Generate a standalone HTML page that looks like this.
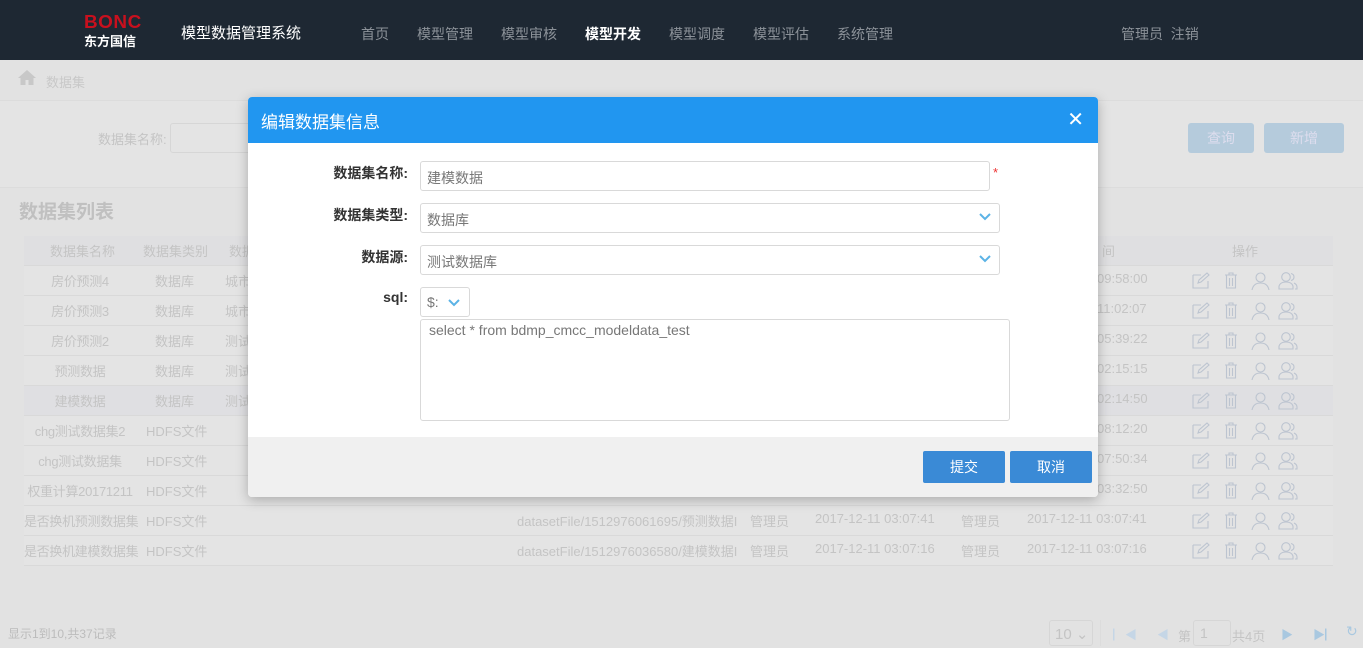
<!DOCTYPE html>
<html><head><meta charset="utf-8"><style>
*{margin:0;padding:0;box-sizing:border-box}
body{width:1363px;height:648px;overflow:hidden;background:#e2e2e2;font-family:"Liberation Sans","Noto Sans CJK SC",sans-serif;font-size:13px;color:#bdbdbd;position:relative}
.a{position:absolute;white-space:nowrap}
.top{position:absolute;left:0;top:0;width:1363px;height:60px;background:#1e2833}
.nav{position:absolute;top:24px;font-size:14px;color:#8c9299}
.row{position:absolute;left:24px;width:1309px;height:30px;border-bottom:1px solid #d9d9d9;background:#e4e4e4}
.row span{position:absolute;top:5px;white-space:nowrap;color:#c4c4c4}
.ic{position:absolute;top:6px}
.modal{position:absolute;left:248px;top:97px;width:850px;height:400px;background:#fff;border-radius:4px;box-shadow:0 3px 12px rgba(0,0,0,.25);overflow:hidden}
.mh{height:46px;background:#2196f0;color:#fff;font-size:17px;padding:11px 0 0 13px}
.lbl{position:absolute;font-weight:bold;color:#333;font-size:14px;text-align:right;width:100px}
.inp{position:absolute;border:1px solid #d9d9d9;border-radius:3px;background:#fff;color:#777;font-size:14px;padding:6px 6px}
.chev{position:absolute;right:8px;top:9px}
.btn{position:absolute;top:354px;height:32px;width:82px;background:#3a8ad6;color:#fff;font-size:14px;text-align:center;line-height:32px;border-radius:2px}
</style></head><body>
<div class="top">
 <div class="a" style="left:84px;top:13px;color:#c8101e;font-weight:bold;font-size:18px;letter-spacing:0.5px;line-height:18px;transform:scaleX(1.05);transform-origin:left">BONC</div>
 <div class="a" style="left:84px;top:31px;color:#fff;font-weight:bold;font-size:13px">东方国信</div>
 <div class="a" style="left:181px;top:22px;color:#fff;font-size:15px">模型数据管理系统</div>
 <div class="nav" style="left:361px">首页</div>
 <div class="nav" style="left:417px">模型管理</div>
 <div class="nav" style="left:501px">模型审核</div>
 <div class="nav" style="left:585px;color:#fff;font-weight:bold">模型开发</div>
 <div class="nav" style="left:669px">模型调度</div>
 <div class="nav" style="left:753px">模型评估</div>
 <div class="nav" style="left:837px">系统管理</div>
 <div class="nav" style="left:1121px">管理员&nbsp; 注销</div>
</div>
<svg class="a" style="left:18px;top:70px" width="18" height="15" viewBox="0 0 18 15"><path d="M9 0L0 8h2.5v7h5v-5h3v5h5V8H18z" fill="#c8c8c8"/></svg>
<div class="a" style="left:46px;top:72px;color:#c8c8c8">数据集</div>
<div class="a" style="left:0;top:100px;width:1363px;height:88px;background:#e4e4e4;border-top:1px solid #dcdcdc;border-bottom:1px solid #dcdcdc"></div>
<div class="a" style="left:98px;top:129px;color:#c4c4c4">数据集名称:</div>
<div class="a" style="left:170px;top:123px;width:100px;height:30px;border:1px solid #d6d6d6;border-radius:3px"></div>
<div class="a" style="left:1188px;top:123px;width:66px;height:30px;background:#b5cbdc;border-radius:3px;color:#dde;text-align:center;line-height:30px;font-size:14px">查询</div>
<div class="a" style="left:1264px;top:123px;width:80px;height:30px;background:#b5cbdc;border-radius:3px;color:#dde;text-align:center;line-height:30px;font-size:14px">新增</div>
<div class="a" style="left:19px;top:197px;font-size:19px;font-weight:bold;color:#c0c0c0">数据集列表</div>
<div class="a" style="left:24px;top:236px;width:1309px;height:330px;border:1px solid #dadada;background:#e4e4e4"></div>
<div class="row" style="top:236px;background:#dfdfe1">
 <span style="left:26px">数据集名称</span><span style="left:119px">数据集类别</span><span style="left:205px">数据</span><span style="left:1078px">间</span><span style="left:1208px">操作</span>
</div>
<div id="rows"></div>
<div class="a" style="left:8px;top:625px;color:#bcbcbc;font-size:12px">显示1到10,共37记录</div>
<div class="a" style="left:1049px;top:620px;width:44px;height:26px;border:1px solid #d6d6d6;border-radius:3px;color:#c4c4c4;font-size:15px;padding:4px 5px">10 ⌄</div>
<div class="a" style="left:1100px;top:620px;height:26px;width:60px;border-left:1px solid #dcdcdc"></div>
<div class="a" style="left:1113px;top:626px;color:#c5d6e6;font-size:12px">▏◀&nbsp;&nbsp;&nbsp;&nbsp;&nbsp;&nbsp;◀</div>
<div class="a" style="left:1178px;top:626px;color:#c4c4c4">第</div>
<div class="a" style="left:1193px;top:620px;width:38px;height:26px;border:1px solid #d6d6d6;border-radius:3px;padding:4px 6px;color:#c4c4c4;font-size:14px">1</div>
<div class="a" style="left:1232px;top:626px;color:#c4c4c4">共4页</div>
<div class="a" style="left:1281px;top:626px;color:#a9c8e0;font-size:12px">▶&nbsp;&nbsp;&nbsp;&nbsp;&nbsp;&nbsp;▶▏</div>
<div class="a" style="left:1346px;top:623px;color:#a9c8e0;font-size:14px">↻</div>

<div class="modal">
 <div class="mh">编辑数据集信息<span style="position:absolute;right:14px;top:10px;font-size:20px">✕</span></div>
 <div class="lbl" style="left:60px;top:66px">数据集名称:</div>
 <div class="inp" style="left:172px;top:64px;width:570px;height:30px">建模数据</div>
 <div class="a" style="left:745px;top:68px;color:#e33;font-size:13px">*</div>
 <div class="lbl" style="left:60px;top:108px">数据集类型:</div>
 <div class="inp" style="left:172px;top:106px;width:580px;height:30px">数据库<svg class="chev" width="12" height="8"><path d="M1 1l5 5 5-5" stroke="#5bb3e6" stroke-width="2" fill="none"/></svg></div>
 <div class="lbl" style="left:60px;top:150px">数据源:</div>
 <div class="inp" style="left:172px;top:148px;width:580px;height:30px">测试数据库<svg class="chev" width="12" height="8"><path d="M1 1l5 5 5-5" stroke="#5bb3e6" stroke-width="2" fill="none"/></svg></div>
 <div class="lbl" style="left:60px;top:192px">sql:</div>
 <div class="inp" style="left:172px;top:190px;width:50px;height:30px">$:<svg class="chev" width="12" height="8" style="right:9px;top:11px"><path d="M1 1l5 5 5-5" stroke="#5bb3e6" stroke-width="2" fill="none"/></svg></div>
 <div class="inp" style="left:172px;top:222px;width:590px;height:102px;padding:2px 8px">select * from bdmp_cmcc_modeldata_test</div>
 <div style="position:absolute;left:0;top:340px;width:850px;height:60px;background:#f0f0f0"></div>
 <div class="btn" style="left:675px">提交</div>
 <div class="btn" style="left:762px">取消</div>
</div>
<script>
var d=[["房价预测4","数据库","城市","09:58:00"],["房价预测3","数据库","城市","11:02:07"],["房价预测2","数据库","测试","05:39:22"],["预测数据","数据库","测试","02:15:15"],["建模数据","数据库","测试","02:14:50"],["chg测试数据集2","HDFS文件","","08:12:20"],["chg测试数据集","HDFS文件","","07:50:34"],["权重计算20171211","HDFS文件","","03:32:50"],["是否换机预测数据集","HDFS文件","","03:07:41","datasetFile/1512976061695/预测数据I","2017-12-11 03:07:41"],["是否换机建模数据集","HDFS文件","","03:07:16","datasetFile/1512976036580/建模数据I","2017-12-11 03:07:16"]];
var ic='<svg class="ic" style="left:1168px" width="18" height="17" viewBox="0 0 18 17" fill="none" stroke="#bcc4d0" stroke-width="1.1"><path d="M1 3h8M1 3v13h15V9"/><path d="M6 11l1-3 8-7 2 2-8 7z"/></svg><svg class="ic" style="left:1200px" width="14" height="17" viewBox="0 0 14 17" fill="none" stroke="#bcc4d0" stroke-width="1.1"><path d="M1 3h12M5 3V1h4v2M2.5 3v13h9V3M5.5 6v8M8.5 6v8"/></svg><svg class="ic" style="left:1227px" width="19" height="18" viewBox="0 0 19 18" fill="none" stroke="#bcc4d0" stroke-width="1.1"><circle cx="9.5" cy="5.5" r="4.5"/><path d="M1 18c1-5 4.5-7 8.5-7s7.5 2 8.5 7"/></svg><svg class="ic" style="left:1254px" width="20" height="18" viewBox="0 0 20 18" fill="none" stroke="#bcc4d0" stroke-width="1.1"><circle cx="8" cy="5" r="4.3"/><path d="M1 17v-3c1-3 4-4 7-4s6 1 7 4v3zM13 1.5c2 .5 3 2 3 3.5s-1 3-3 3.5M16 11c2 1 3 2 3 4v2h-2"/></svg>';
var h='';
d.forEach(function(r,i){
 var y=266+i*30;var bg=i==4?'#dfdfe2':'#e4e4e4';
 h+='<div class="row" style="top:'+y+'px;background:'+bg+'"><span style="left:0;width:112px;text-align:center;letter-spacing:-0.3px">'+r[0]+'</span><span style="left:'+(r[1]=='数据库'?131:122)+'px">'+r[1]+'</span><span style="left:201px">'+r[2]+'</span>';
 if(r[4])h+='<span style="left:493px">'+r[4]+'</span><span style="left:726px">管理员</span><span style="left:791px">'+r[5]+'</span><span style="left:937px">管理员</span><span style="left:1003px">'+r[5]+'</span>';
 else h+='<span style="left:1073px">'+r[3]+'</span>';
 h+=ic+'</div>';
});
document.getElementById('rows').innerHTML=h;
</script>
</body></html>
